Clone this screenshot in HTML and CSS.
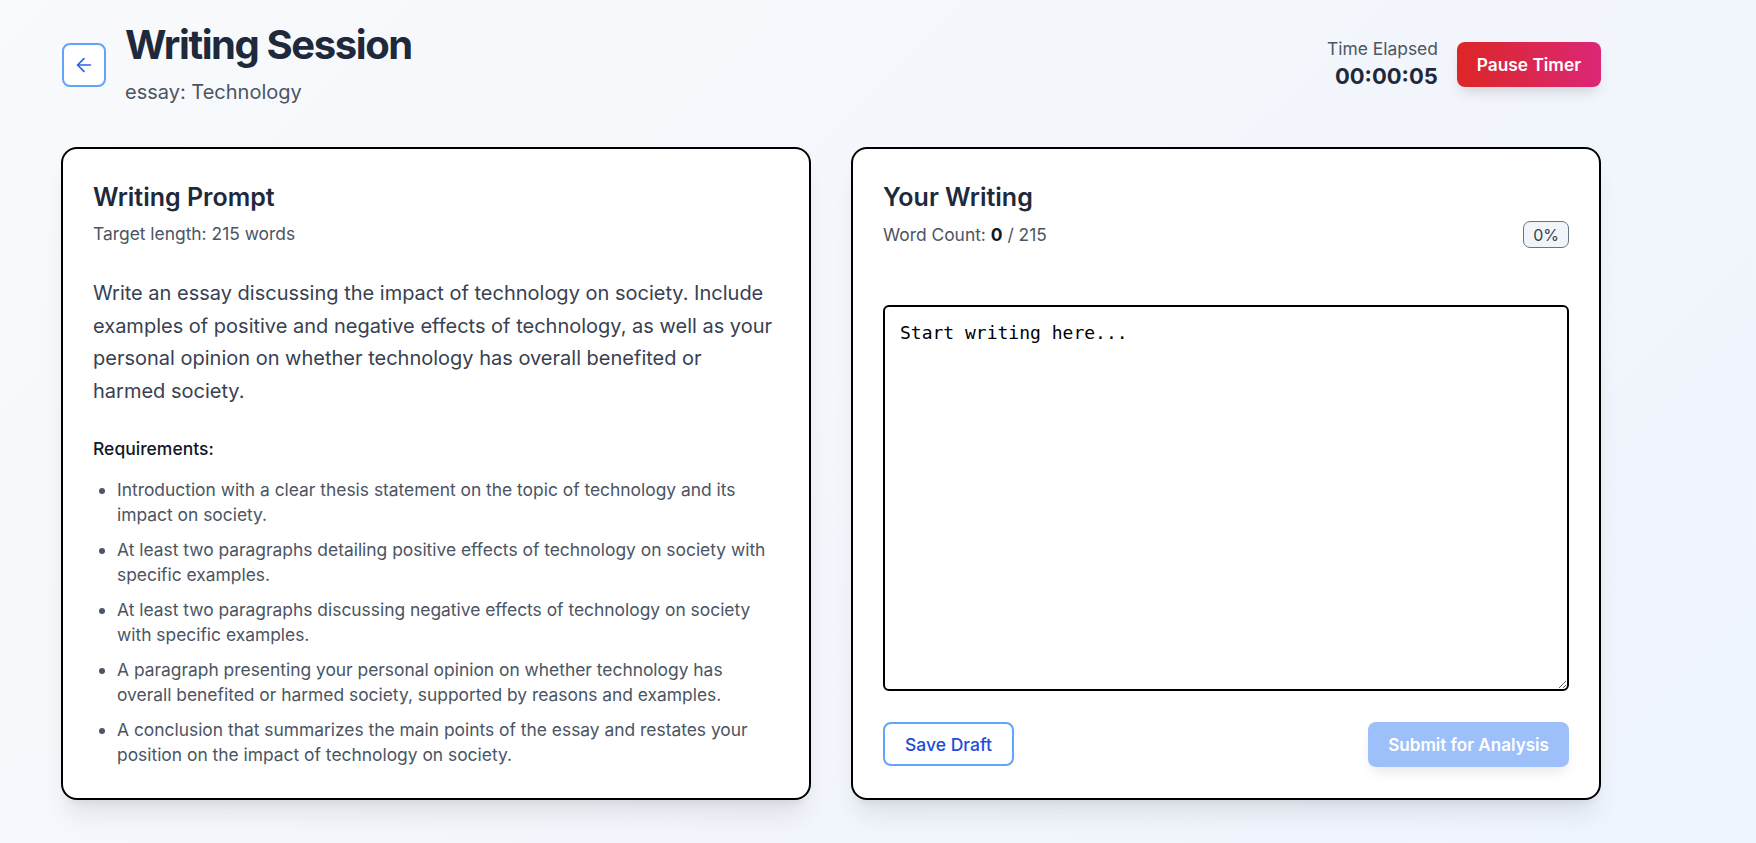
FILE: index.html
```html
<!DOCTYPE html>
<html lang="en">
<head>
<meta charset="UTF-8">
<meta name="viewport" content="width=device-width, initial-scale=1.0">
<title>Writing Session</title>
<link rel="stylesheet" href="styles.css">
</head>
<body>
  <div class="page">
    <header class="topbar">
      <div class="title-group">
        <button class="back-btn" aria-label="Back">
          <svg width="22" height="22" viewBox="0 0 24 24" fill="none" stroke="currentColor" stroke-width="1.8" stroke-linecap="round" stroke-linejoin="round">
            <path d="m12 19-7-7 7-7"/>
            <path d="M19 12H5"/>
          </svg>
        </button>
        <div>
          <h1 class="page-title">Writing Session</h1>
          <p class="page-sub">essay: Technology</p>
        </div>
      </div>
      <div class="timer-group">
        <div class="timer">
          <div class="timer-label">Time Elapsed</div>
          <div class="timer-value">00:00:05</div>
        </div>
        <button class="pause-btn">Pause Timer</button>
      </div>
    </header>

    <main class="columns">
      <section class="card">
        <h2 class="card-title">Writing Prompt</h2>
        <p class="card-meta">Target length: 215 words</p>
        <p class="prompt-text">Write an essay discussing the impact of technology on society. Include examples of positive and negative effects of technology, as well as your personal opinion on whether technology has overall benefited or harmed society.</p>
        <h3 class="req-title">Requirements:</h3>
        <ul class="req-list">
          <li>Introduction with a clear thesis statement on the topic of technology and its impact on society.</li>
          <li>At least two paragraphs detailing positive effects of technology on society with specific examples.</li>
          <li>At least two paragraphs discussing negative effects of technology on society with specific examples.</li>
          <li>A paragraph presenting your personal opinion on whether technology has overall benefited or harmed society, supported by reasons and examples.</li>
          <li>A conclusion that summarizes the main points of the essay and restates your position on the impact of technology on society.</li>
        </ul>
      </section>

      <section class="card writing-card">
        <h2 class="card-title">Your Writing</h2>
        <div class="count-row">
          <p class="card-meta">Word Count: <strong>0</strong> / 215</p>
          <span class="badge">0%</span>
        </div>
        <textarea class="editor" placeholder="Start writing here..."></textarea>
        <div class="actions">
          <button class="draft-btn">Save Draft</button>
          <button class="submit-btn" disabled>Submit for Analysis</button>
        </div>
      </section>
    </main>
  </div>
</body>
</html>
```

FILE: styles.css
```css
* {
  box-sizing: border-box;
}

body {
  margin: 0;
  min-height: 100vh;
  font-family: Inter, "Noto Sans", sans-serif;
  background: linear-gradient(135deg, #f8fafc 0%, #f3f6fb 50%, #eef4fe 100%);
  color: #1f2937;
}

.page {
  width: 1540px;
  margin-left: 61px;
  padding-top: 21px;
}

.topbar {
  display: flex;
  justify-content: space-between;
  align-items: center;
  margin-bottom: 41px;
}

.title-group {
  display: flex;
  align-items: center;
  gap: 19px;
}

.back-btn {
  width: 44px;
  height: 44px;
  display: flex;
  align-items: center;
  justify-content: center;
  margin-left: 1px;
  margin-top: 2px;
  background: #fff;
  border: 2px solid #60a5fa;
  border-radius: 8px;
  color: #2563eb;
  padding: 0;
  cursor: pointer;
}

.page-title {
  margin: 0;
  font-size: 40px;
  line-height: 48px;
  font-weight: 700;
  letter-spacing: -1.4px;
  color: #1e293b;
}

.page-sub {
  margin: 9px 0 0;
  font-size: 20px;
  line-height: 28px;
  color: #4b5563;
}

.timer-group {
  display: flex;
  align-items: center;
  gap: 19px;
}

.timer {
  text-align: right;
}

.timer-label {
  font-size: 17.4px;
  line-height: 24px;
  color: #4b5563;
}

.timer-value {
  font-size: 22px;
  line-height: 30px;
  font-weight: 700;
  color: #1e293b;
}

.pause-btn {
  height: 45px;
  margin-top: 2px;
  padding: 0 20px;
  border: none;
  border-radius: 8px;
  background: linear-gradient(90deg, #dc2626, #db2777);
  color: #fff;
  font-family: inherit;
  font-size: 17.3px;
  font-weight: 600;
  box-shadow: 0 8px 14px -4px rgba(0, 0, 0, 0.15);
  cursor: pointer;
}

.columns {
  display: grid;
  grid-template-columns: 1fr 1fr;
  gap: 40px;
}

.card {
  background: #fff;
  border: 2px solid #000;
  border-radius: 16px;
  padding: 32px 30px 31px;
  box-shadow: 0 20px 25px -5px rgba(0, 0, 0, 0.08), 0 8px 10px -6px rgba(0, 0, 0, 0.08);
}

.card-title {
  margin: 0;
  font-size: 25px;
  line-height: 32px;
  font-weight: 600;
  color: #1e293b;
}

.card-meta {
  margin: 8px 0 0;
  font-size: 17.4px;
  line-height: 26px;
  color: #4b5563;
}

.card-meta strong {
  color: #111827;
  font-weight: 700;
}

.prompt-text {
  margin: 30px 0 0;
  font-size: 20px;
  line-height: 32.5px;
  color: #374151;
}

.req-title {
  margin: 29px 0 0;
  font-size: 17.5px;
  line-height: 26px;
  font-weight: 500;
  color: #111827;
}

.req-list {
  margin: 15px 0 0;
  padding-left: 24px;
  color: #4b5563;
  font-size: 17.4px;
  line-height: 25px;
}

.req-list li {
  margin-top: 10px;
}

.req-list li:first-child {
  margin-top: 0;
}

.writing-card {
  display: flex;
  flex-direction: column;
}

.count-row {
  display: flex;
  justify-content: space-between;
  align-items: center;
}

.badge {
  margin-top: 8px;
  height: 27px;
  padding: 0 9px;
  display: flex;
  align-items: center;
  border: 1px solid #64748b;
  border-radius: 7px;
  background: #f1f5f9;
  font-size: 16px;
  color: #374151;
}

.editor {
  flex: 1;
  margin-top: 57px;
  width: 100%;
  padding: 14px 15px;
  border: 2px solid #000;
  border-radius: 6px;
  font-family: "DejaVu Sans Mono", "Liberation Mono", monospace;
  font-size: 18px;
  line-height: 24px;
  color: #000;
  resize: vertical;
}

.editor::placeholder {
  color: #000;
}

.actions {
  display: flex;
  justify-content: space-between;
  margin-top: 31px;
}

.draft-btn {
  height: 44px;
  padding: 0 20px;
  background: #fff;
  border: 2px solid #60a5fa;
  border-radius: 8px;
  color: #1d4ed8;
  font-family: inherit;
  font-size: 17.5px;
  font-weight: 500;
  cursor: pointer;
}

.submit-btn {
  height: 45px;
  padding: 0 20px;
  border: none;
  border-radius: 8px;
  background: #9dc0fa;
  color: #fff;
  font-family: inherit;
  font-size: 17.1px;
  font-weight: 600;
  box-shadow: 0 8px 14px -4px rgba(0, 0, 0, 0.1);
}
```
